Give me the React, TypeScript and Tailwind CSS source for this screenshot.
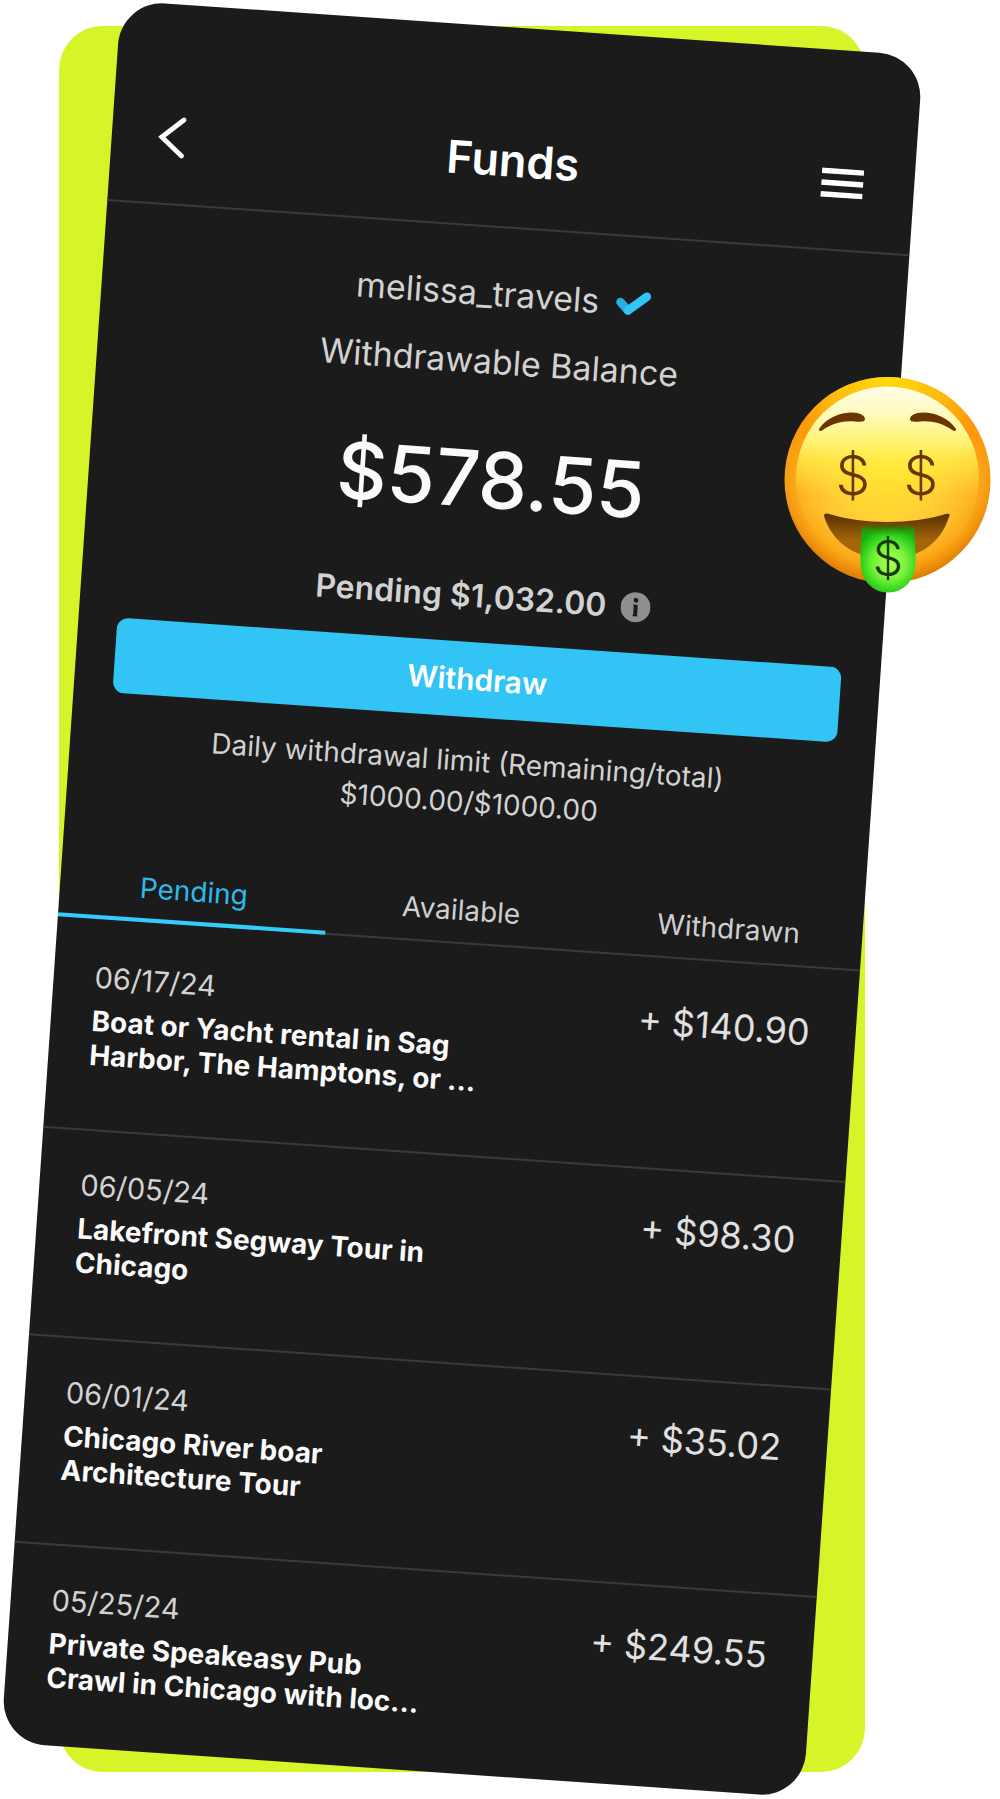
type Transaction = { date: string; title: string; amount: string };

const transactions: Transaction[] = [
  { date: "06/17/24", title: "Boat or Yacht rental in Sag Harbor, The Hamptons, or ...", amount: "+ $140.90" },
  { date: "06/05/24", title: "Lakefront Segway Tour in Chicago", amount: "+ $98.30" },
  { date: "06/01/24", title: "Chicago River boar Architecture Tour", amount: "+ $35.02" },
  { date: "05/25/24", title: "Private Speakeasy Pub Crawl in Chicago with loc...", amount: "+ $249.55" },
];

function BackIcon() {
  return (
    <svg aria-hidden="true" className="h-[42px] w-[26px] overflow-visible" viewBox="0 0 26 42" fill="none" stroke="#fff" strokeWidth="4.8" strokeLinecap="round">
      <path d="M22 3 L1 21.500 L22 39" />
    </svg>
  );
}

function MenuIcon() {
  return (
    <svg aria-hidden="true" className="h-[30px] w-[44px]" viewBox="0 0 44 30" fill="#fff">
      <path d="M0 .5h42v5.400H0zM0 12.300h42v5.400H0zM0 24h42v5.400H0z" />
    </svg>
  );
}

function VerifiedIcon() {
  return (
    <svg aria-label="Verified" role="img" className="h-[26px] w-[36px]" viewBox="0 0 36 26" fill="none" strokeWidth="8.5" strokeLinecap="round" strokeLinejoin="round">
      <path d="M5 12.500 L13 20.500" stroke="#2aaee0" />
      <path d="M13 20.500 L31 5.500" stroke="#31c4f5" />
    </svg>
  );
}

function InfoIcon() {
  return (
    <svg aria-hidden="true" className="h-[30px] w-[30px]" viewBox="0 0 30 30">
      <circle cx="15" cy="15" r="15" fill="#8f8f8f" />
      <circle cx="15" cy="8" r="2.400" fill="#1b1b1b" />
      <path d="M12.600 12.500h4.500v10.500h.5v1.200h-5v-1.200h.5v-9.300h-.5z" fill="#1b1b1b" />
    </svg>
  );
}

function MoneyFace() {
  return (
    <svg role="img" aria-label="Money-mouth face" className="h-[220px] w-[209px]" viewBox="0 0 209 220">
      <defs>
        <radialGradient id="face" gradientUnits="userSpaceOnUse" cx="104" cy="92" r="118">
          <stop offset="0" stopColor="#ffe42c" />
          <stop offset="0.45" stopColor="#ffd335" />
          <stop offset="0.75" stopColor="#fdb220" />
          <stop offset="0.88" stopColor="#f49a10" />
          <stop offset="1" stopColor="#d67405" />
        </radialGradient>
        <radialGradient id="rim" gradientUnits="userSpaceOnUse" cx="104" cy="0" r="150">
          <stop offset="0" stopColor="#ffdc0a" />
          <stop offset="0.35" stopColor="#ffbe0c" />
          <stop offset="0.65" stopColor="#ff970a" />
          <stop offset="1" stopColor="#ff970a" stopOpacity="0" />
        </radialGradient>
        <radialGradient id="body" gradientUnits="userSpaceOnUse" cx="104" cy="88" r="112">
          <stop offset="0" stopColor="#ffe62c" />
          <stop offset="0.5" stopColor="#ffd235" />
          <stop offset="0.72" stopColor="#ffc02c" />
          <stop offset="0.88" stopColor="#fdae1c" stopOpacity="0.8" />
          <stop offset="1" stopColor="#f79c12" stopOpacity="0" />
        </radialGradient>
        <linearGradient id="shine" x1="0" y1="0" x2="0" y2="1">
          <stop offset="0" stopColor="#fffdea" />
          <stop offset="0.15" stopColor="#fffabe" />
          <stop offset="0.3" stopColor="#fff578" stopOpacity="0.95" />
          <stop offset="0.42" stopColor="#fff04a" stopOpacity="0.6" />
          <stop offset="0.6" stopColor="#ffe534" stopOpacity="0" />
        </linearGradient>
        <linearGradient id="mouth" x1="0" y1="0" x2="0" y2="1">
          <stop offset="0" stopColor="#5b2d00" />
          <stop offset="0.3" stopColor="#7d4a06" />
          <stop offset="0.6" stopColor="#a5650a" />
          <stop offset="1" stopColor="#a5650a" />
        </linearGradient>
        <radialGradient id="tongue" gradientUnits="userSpaceOnUse" cx="107" cy="188" r="36">
          <stop offset="0" stopColor="#a8ff58" />
          <stop offset="0.45" stopColor="#7cf23c" />
          <stop offset="0.75" stopColor="#35d61e" />
          <stop offset="1" stopColor="#1aae0c" />
        </radialGradient>
        <linearGradient id="tongueTop" x1="0" y1="0" x2="0" y2="1">
          <stop offset="0" stopColor="#5a4a00" />
          <stop offset="0.16" stopColor="#1aa00c" stopOpacity="0" />
        </linearGradient>
      </defs>
      <circle cx="104.500" cy="105" r="103" fill="url(#face)" />
      <circle cx="104.500" cy="105" r="103" fill="url(#rim)" />
      <circle cx="104.500" cy="103" r="91.500" fill="url(#body)" />
      <circle cx="104.500" cy="103" r="91.500" fill="url(#shine)" />
      <g fill="#6b3500">
        <path d="M36 54 C43 43 57 37.500 69 37.500 C77 37.500 82 40.500 82 44 C82 47 78 47 72 46.500 C60 45.500 49 48.500 39 55.500 C37 56.500 35.500 55.500 36 54 Z" />
        <path d="M173 54 C166 43 152 37.500 140 37.500 C132 37.500 127 40.500 127 44 C127 47 131 47 137 46.500 C149 45.500 160 48.500 170 55.500 C172 56.500 173.500 55.500 173 54 Z" />
      </g>
      <path d="M41 141 C41 138.500 43 138 46 139 C80 149.500 129 149.500 163 139 C166 138 168 139.500 165.500 143 C158 168 135 184 104.500 184 C74 184 49 168 41 141 Z" fill="url(#mouth)" />
      <path d="M79 152 C90 149 120 149 131 152 C132 164 132.500 176 132.500 186 C132.500 205 121 217.500 105 217.500 C89 217.500 77.500 205 77.500 186 C77.500 176 78 164 79 152 Z" fill="url(#tongue)" />
      <path d="M79 152 C90 149 120 149 131 152 C132 164 132.500 176 132.500 186 C132.500 205 121 217.500 105 217.500 C89 217.500 77.500 205 77.500 186 C77.500 176 78 164 79 152 Z" fill="url(#tongueTop)" />
      <g fontFamily="Inter, sans-serif" fontWeight="300" textAnchor="middle">
        <text x="70" y="120" fontSize="55" fill="#6b3500">$</text>
        <text x="138" y="120" fontSize="55" fill="#6b3500">$</text>
        <text x="105" y="200" fontSize="48" fill="#16380a">$</text>
      </g>
    </svg>
  );
}

function Tab({ label, active = false }: { label: string; active?: boolean }) {
  return (
    <button
      type="button"
      role="tab"
      aria-selected={active}
      className={
        active
          ? "relative h-[65px] text-[28px] text-[#2fb9ea] after:absolute after:inset-x-0 after:-bottom-[2px] after:h-[4px] after:bg-[#32cdfb]"
          : "h-[65px] text-[28px] text-[#cfcfcf]"
      }
    >
      {label}
    </button>
  );
}

export default function App() {
  return (
    <main className="relative overflow-hidden bg-white pt-[26px] pr-[135px] pb-[26px] pl-[59px] font-['Inter',sans-serif]">
      <div className="rounded-[44px] bg-[#d7f428]">
        <section className="mx-px rotate-[3.95deg] overflow-hidden rounded-[44px] bg-[#1b1b1b] text-[#d2d2d2]">
          <header className="grid h-[201px] grid-cols-[1fr_auto_1fr] items-center border-b-2 border-[#3a3a3a] px-[49px] pt-[67px]">
            <button type="button" aria-label="Back" className="justify-self-start">
              <BackIcon />
            </button>
            <h1 className="text-[45px] font-semibold text-white">Funds</h1>
            <button type="button" aria-label="Menu" className="justify-self-end">
              <MenuIcon />
            </button>
          </header>

          <div className="px-[39px] pt-[32px] text-center">
            <div className="flex items-center justify-center gap-[16px] text-[34px] leading-[68px]">
              <span>melissa_travels</span>
              <VerifiedIcon />
            </div>
            <p className="text-[34px] leading-[68px]">Withdrawable Balance</p>
            <p className="mt-[36px] text-[78px] leading-[96px] font-medium text-[#fafafa]">$578.55</p>
            <div className="mt-[49px] flex items-center justify-center gap-[14px] text-[32px] leading-[40px] font-semibold">
              <span>Pending $1,032.00</span>
              <InfoIcon />
            </div>
            <button type="button" className="mt-[26px] h-[75px] w-full rounded-[11px] bg-[#31c4f5] text-[30px] font-semibold text-white">
              Withdraw
            </button>
            <p className="mt-[24px] text-[28px] leading-[41px]">
              Daily withdrawal limit (Remaining/total)&nbsp;
              <br />
              $1000.00/$1000.00
            </p>
          </div>

          <div role="tablist" className="mt-[54px] grid grid-cols-3 border-b-2 border-[#3a3a3a]">
            <Tab label="Pending" active />
            <Tab label="Available" />
            <Tab label="Withdrawn" />
          </div>

          <ul className="pt-[4px]">
            {transactions.map((t) => (
              <li key={t.date} className="flex items-start justify-between border-b-2 border-[#3a3a3a] pt-[35px] pr-[46px] pb-[57px] pl-[41px] last:border-b-0 last:pb-[51px]">
                <div className="w-[390px]">
                  <time className="block text-[29px] leading-[40px]">{t.date}</time>
                  <h2 className="mt-[6px] text-[28px] leading-[34px] font-bold text-[#fafafa]">{t.title}</h2>
                </div>
                <span className="text-[36px] leading-[50px] text-[#e0e0e0]">{t.amount}</span>
              </li>
            ))}
          </ul>
        </section>
      </div>

      <div className="absolute top-[375px] right-[8px]">
        <MoneyFace />
      </div>
    </main>
  );
}
